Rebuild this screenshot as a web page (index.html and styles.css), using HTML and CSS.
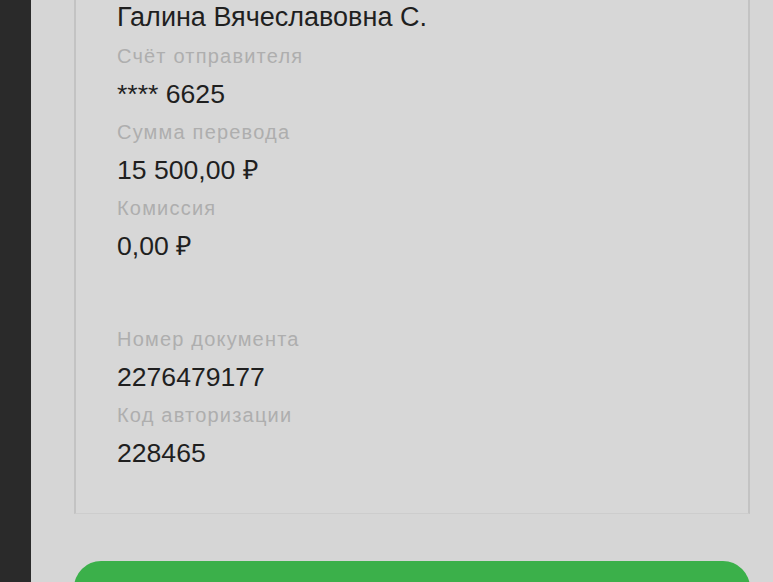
FILE: index.html
```html
<!DOCTYPE html>
<html lang="ru">
<head>
	<meta charset="UTF-8">
	<title>Чек перевода</title>
	<link rel="stylesheet" href="styles.css">
</head>
<body>
	<div id="wrap">
		<div id="side"></div>
		<div id="main">
			<div class="card">
				<div class="value name">Галина Вячеславовна С.</div>
				<div class="label">Счёт отправителя</div>
				<div class="value">**** 6625</div>
				<div class="label">Сумма перевода</div>
				<div class="value">15 500,00 ₽</div>
				<div class="label">Комиссия</div>
				<div class="value">0,00 ₽</div>
				<div class="spacer"></div>
				<div class="label">Номер документа</div>
				<div class="value">2276479177</div>
				<div class="label">Код авторизации</div>
				<div class="value">228465</div>
			</div>
			<div class="btn"></div>
		</div>
	</div>
</body>
</html>
```

FILE: styles.css
```css
*{padding:0;margin:0;box-sizing:border-box;}
html,body{height:100%;overflow:hidden;}
body{background:#d6d6d6;font-family:"Liberation Sans",Arial,sans-serif;}
#wrap{display:flex;height:100%;overflow:hidden;}
#side{width:31px;background:#2a2a2a;flex:none;}
#main{flex:1;height:100%;overflow:hidden;padding-left:43px;padding-right:23px;}
.card{margin-top:-2px;height:516px;padding-left:41px;border-left:2px solid #c3c3c3;border-right:2px solid #c3c3c3;border-bottom:1px solid #cdcdcd;background:#d7d7d7;}
.card .value{font-size:26.6px;line-height:38px;color:#1f1f1f;}
.card .name{font-size:27px;line-height:39px;}
.card .label{font-size:20px;line-height:38px;color:#aeaeae;letter-spacing:1.2px;}
.card .spacer{height:55px;}
.btn{margin-top:47px;height:60px;border-radius:27px;background:#3bb04a;width:676px;}
```
